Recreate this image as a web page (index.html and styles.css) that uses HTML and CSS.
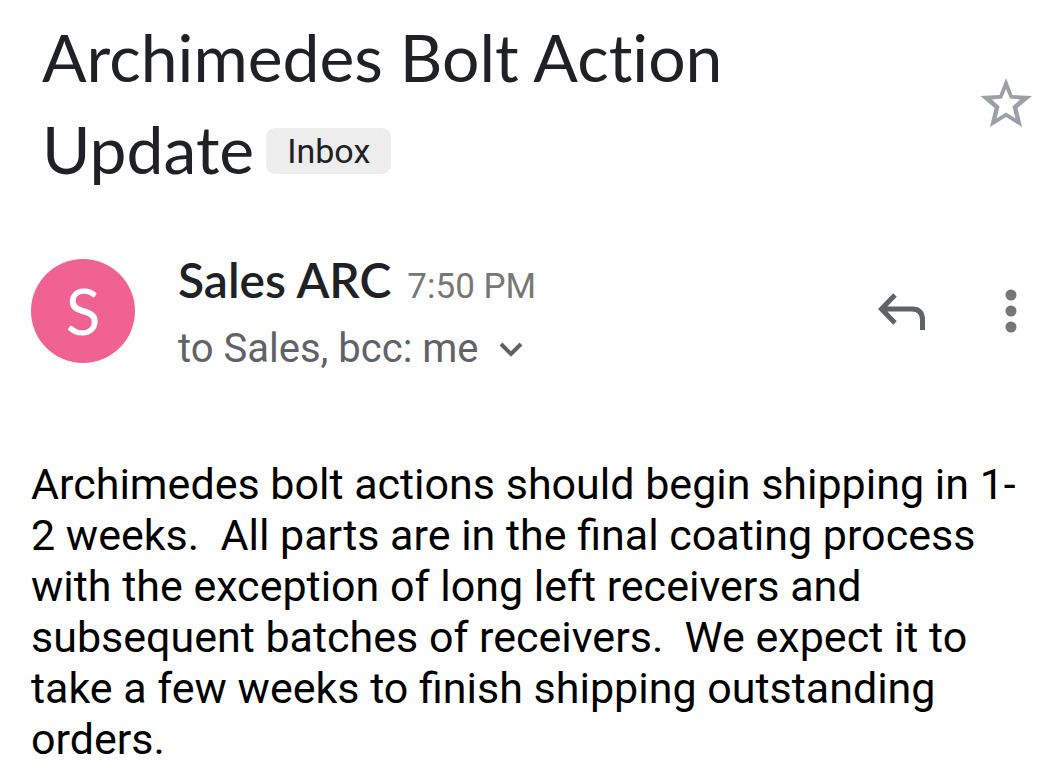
FILE: index.html
```html
<!DOCTYPE html>
<html lang="en">
<head>
<meta charset="utf-8">
<meta name="viewport" content="width=device-width, initial-scale=1">
<title>Archimedes Bolt Action Update</title>
<link rel="stylesheet" href="styles.css">
</head>
<body>
<main class="message">
  <header class="subject">
    <div class="subject-main">
      <h1 class="subject-title">Archimedes Bolt Action Update</h1><button class="label" type="button">Inbox</button>
    </div>
    <button class="icon-button star" type="button" aria-label="Star">
      <svg width="52" height="50" viewBox="0 0 52 50"><path fill-rule="evenodd" d="M26 0L32.500 17L52 18L37.500 30L42 49L26 39L10 49L14.500 30L0.500 18L19.500 17ZM26 11L22 20.500L12 21.500L19.500 28.500L16.500 40.500L26 34.500L35.500 40.500L32.500 28.500L40 21.500L30 20.500Z"/></svg>
    </button>
  </header>
  <section class="sender">
    <div class="avatar">S</div>
    <div class="sender-info">
      <div class="sender-line"><span class="sender-name">Sales ARC</span><time class="time">7:50 PM</time></div>
      <button class="recipients" type="button">to Sales, bcc: me
        <svg width="24" height="16" viewBox="0 0 24 16"><path d="M2 3L12 13L22 3"/></svg>
      </button>
    </div>
    <button class="icon-button reply" type="button" aria-label="Reply">
      <svg width="48" height="38" viewBox="0 0 48 38"><path d="M17 3L3.500 17L17 31M4 17H34Q44.500 17 44.500 28V38"/></svg>
    </button>
    <button class="icon-button more" type="button" aria-label="More options">
      <svg width="12" height="44" viewBox="0 0 12 44"><circle cx="6" cy="6" r="5.500"/><circle cx="6" cy="22" r="5.500"/><circle cx="6" cy="38" r="5.500"/></svg>
    </button>
  </section>
  <p class="body-text">Archimedes bolt actions should begin shipping in 1-<wbr>2 weeks.&nbsp; All parts are in the final coating process with the exception of long left receivers and subsequent batches of receivers.&nbsp; We expect it to take a few weeks to finish shipping outstanding orders.</p>
</main>
</body>
</html>
```
FILE: styles.css
```css
* { box-sizing: border-box; }
body { margin: 0; background: #fff; color: #202124; font-family: Roboto, "Liberation Sans", sans-serif; }
button { margin: 0; padding: 0; border: 0; background: none; color: inherit; font: inherit; cursor: pointer; }
svg { display: block; fill: none; stroke: #5f6368; stroke-width: 4; }
.message { padding: 11px 20px 16px 31px; }
.subject { display: flex; justify-content: space-between; align-items: center; padding-left: 11px; }
.subject-main { max-width: 720px; font-family: Lato, sans-serif; font-size: 66px; line-height: 92px; }
.subject-title { display: inline; margin: 0; font-size: 66px; font-weight: 400; font-variant-ligatures: none; }
.label { height: 46px; margin-left: 12px; padding: 0 21px; border-radius: 9px; background: #ededed; font-family: Roboto, sans-serif; font-size: 34px; line-height: 46px; vertical-align: 11px; }
.icon-button { flex: none; }
.star svg { fill: #9aa0a6; stroke: none; }
.sender { display: flex; align-items: center; margin-top: 47px; }
.avatar { display: grid; place-items: center; flex: none; width: 104px; height: 104px; margin-right: 43px; border-radius: 50%; background: #f06292; color: #fff; font-family: Lato, sans-serif; font-size: 64px; line-height: 104px; }
.sender-info { flex: 1; padding-top: 10px; }
.sender-line { display: flex; align-items: baseline; gap: 16px; line-height: 56px; }
.sender-name { font-family: Lato, sans-serif; font-size: 48px; font-weight: 600; }
.time { color: #777; font-size: 35px; }
.recipients { display: flex; align-items: center; gap: 20px; margin-top: 4px; color: #5f6368; font-size: 40px; line-height: 60px; }
.reply svg { stroke-width: 5; }
.more { margin: 0 15px 0 79px; }
.more svg { fill: #757575; stroke: none; }
.body-text { margin: 80px 0 0; color: #000; font-size: 43px; line-height: 51px; }
```
